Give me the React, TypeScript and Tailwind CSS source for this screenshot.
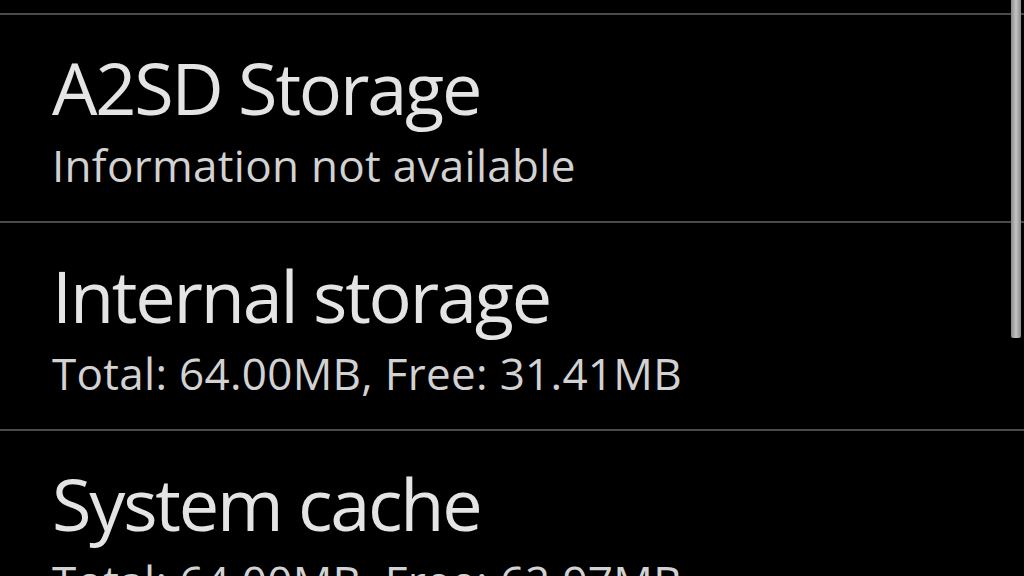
import React from 'react';

interface StorageItem {
  title: string;
  summary: string;
}

const items: StorageItem[] = [
  { title: 'A2SD Storage', summary: 'Information not available' },
  { title: 'Internal storage', summary: 'Total: 64.00MB, Free: 31.41MB' },
  { title: 'System cache', summary: 'Total: 64.00MB, Free: 62.97MB' },
];

function Divider() {
  return <div className="h-[2px] w-full bg-[#4a4a4a]" />;
}

function PreferenceRow({ item }: { item: StorageItem }) {
  return (
    <div className="h-[206px] pl-[52px] pt-[36px]">
      <div className="text-[72px] leading-[72px] tracking-[-2.2px] text-[#e4e4e4] whitespace-nowrap">{item.title}</div>
      <div className="mt-[20px] text-[44px] leading-[44px] tracking-[0.3px] text-[#d2d2d2] whitespace-nowrap">
        {item.summary}
      </div>
    </div>
  );
}

export default function App() {
  return (
    <div
      className="relative h-[576px] w-[1024px] overflow-hidden bg-black"
      style={{ fontFamily: '"Open Sans", "DejaVu Sans", sans-serif' }}
    >
      {/* tail of the previous row */}
      <div className="h-[13px]" />
      {items.map((item) => (
        <React.Fragment key={item.title}>
          <Divider />
          <PreferenceRow item={item} />
        </React.Fragment>
      ))}

      {/* scroll indicator */}
      <div className="absolute right-[3px] top-0 h-[338px] w-[10px] rounded-b-[2px] bg-gradient-to-r from-[#8a8a8a] via-[#c4c4c4] to-[#8a8a8a]" />
    </div>
  );
}
